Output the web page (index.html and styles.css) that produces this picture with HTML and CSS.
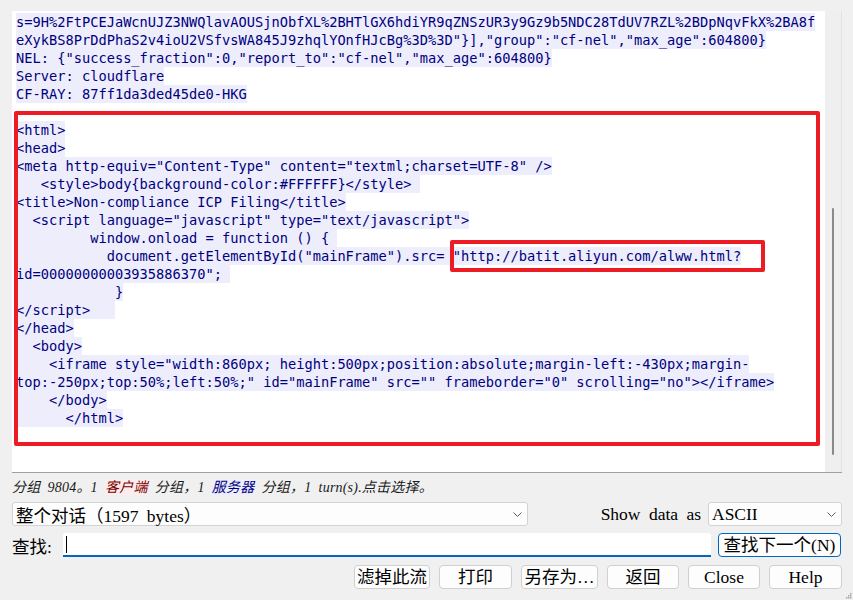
FILE: index.html
```html
<!DOCTYPE html>
<html lang="zh-CN">
<head>
<meta charset="utf-8">
<title>Follow TCP Stream</title>
<link rel="stylesheet" href="styles.css">
</head>
<body>
<div class="dialog">
  <div class="stream">
    <div class="text">
      <div class="ln"><span>s=9H%2FtPCEJaWcnUJZ3NWQlavAOUSjnObfXL%2BHTlGX6hdiYR9qZNSzUR3y9Gz9b5NDC28TdUV7RZL%2BDpNqvFkX%2BA8f</span></div>
      <div class="ln"><span>eXykBS8PrDdPhaS2v4ioU2VSfvsWA845J9zhqlYOnfHJcBg%3D%3D"}],"group":"cf-nel","max_age":604800}</span></div>
      <div class="ln"><span>NEL: {"success_fraction":0,"report_to":"cf-nel","max_age":604800}</span></div>
      <div class="ln"><span>Server: cloudflare</span></div>
      <div class="ln"><span>CF-RAY: 87ff1da3ded45de0-HKG</span></div>
      <div class="ln"><span></span></div>
      <div class="ln"><span>&lt;html&gt;</span></div>
      <div class="ln"><span>&lt;head&gt;</span></div>
      <div class="ln"><span>&lt;meta http-equiv="Content-Type" content="textml;charset=UTF-8" /&gt;</span></div>
      <div class="ln"><span>   &lt;style&gt;body{background-color:#FFFFFF}&lt;/style&gt; </span></div>
      <div class="ln"><span>&lt;title&gt;Non-compliance ICP Filing&lt;/title&gt;</span></div>
      <div class="ln"><span>  &lt;script language="javascript" type="text/javascript"&gt;</span></div>
      <div class="ln"><span>         window.onload = function () { </span></div>
      <div class="ln"><span>           document.getElementById("mainFrame").src= "http://batit.aliyun.com/alww.html?</span></div>
      <div class="ln"><span>id=00000000003935886370"; </span></div>
      <div class="ln"><span>            }</span></div>
      <div class="ln"><span>&lt;/script&gt;   </span></div>
      <div class="ln"><span>&lt;/head&gt;</span></div>
      <div class="ln"><span>  &lt;body&gt;</span></div>
      <div class="ln"><span>    &lt;iframe style="width:860px; height:500px;position:absolute;margin-left:-430px;margin-</span></div>
      <div class="ln"><span>top:-250px;top:50%;left:50%;" id="mainFrame" src="" frameborder="0" scrolling="no"&gt;&lt;/iframe&gt;</span></div>
      <div class="ln"><span>    &lt;/body&gt;</span></div>
      <div class="ln"><span>      &lt;/html&gt;</span></div>
    </div>
    <div class="vscroll"><div class="thumb"></div></div>
  </div>

  <div class="status">分组 9804。1 <span class="cli">客户端</span> 分组，1 <span class="srv">服务器</span> 分组，1 turn(s).点击选择。</div>

  <div class="row combos">
    <div class="combo combo-wide">
      <span>整个对话（1597 bytes）</span>
      <svg class="chev" width="9" height="5" viewBox="0 0 9 5"><polyline points="0.5,0.5 4.5,4.5 8.5,0.5" fill="none" stroke="#5a5a5a" stroke-width="1"/></svg>
    </div>
    <span class="lbl-show">Show data as</span>
    <div class="combo combo-small">
      <span>ASCII</span>
      <svg class="chev" width="9" height="5" viewBox="0 0 9 5"><polyline points="0.5,0.5 4.5,4.5 8.5,0.5" fill="none" stroke="#5a5a5a" stroke-width="1"/></svg>
    </div>
  </div>

  <div class="row find">
    <span class="lbl-find">查找:</span>
    <div class="input"><span class="caret"></span></div>
    <button class="btn btn-default">查找下一个(N)</button>
  </div>

  <div class="row buttons">
    <button class="btn w76">滤掉此流</button>
    <button class="btn w73">打印</button>
    <button class="btn w77">另存为…</button>
    <button class="btn w72">返回</button>
    <button class="btn w72">Close</button>
    <button class="btn w73">Help</button>
  </div>

  <div class="mark mark-body"></div>
  <div class="mark mark-url"></div>
  <svg class="grip" width="6" height="6" viewBox="0 0 6 6"><rect x="4" y="0" width="1.5" height="1.5" fill="#a8a8a8"/><rect x="2" y="2" width="1.5" height="1.5" fill="#a8a8a8"/><rect x="4" y="2" width="1.5" height="1.5" fill="#a8a8a8"/><rect x="0" y="4" width="1.5" height="1.5" fill="#a8a8a8"/><rect x="2" y="4" width="1.5" height="1.5" fill="#a8a8a8"/><rect x="4" y="4" width="1.5" height="1.5" fill="#a8a8a8"/></svg>
</div>
</body>
</html>
```

FILE: styles.css
```css
* { box-sizing: border-box; }

html, body {
  margin: 0;
  padding: 0;
  background: #f0f0f0;
}

body {
  width: 853px;
  height: 600px;
  overflow: hidden;
  font-family: "Liberation Serif", "Noto Sans CJK SC", serif;
  font-size: 17.5px;
  word-spacing: 4px;
  color: #000;
}

.dialog {
  position: relative;
  width: 853px;
  height: 600px;
  padding: 11px 11px 0 12px;
}

/* stream text area */
.stream {
  display: flex;
  width: 830px;
  height: 462px;
  border-bottom: 1px solid #a0a0a0;
}

.text {
  flex: 1;
  background: #ffffff;
  padding: 2px 0 0 4px;
  overflow: hidden;
  font-family: "DejaVu Sans Mono", monospace;
  font-size: 13.69px;
  line-height: 18px;
  word-spacing: 0;
  color: #00007f;
}

.ln {
  height: 18px;
  white-space: pre;
}

.ln span {
  display: inline-block;
  height: 18px;
  background: #ededfb;
  vertical-align: top;
}

.vscroll {
  position: relative;
  width: 17px;
  background: #efefef;
  border-right: 1px solid #e2e2e2;
}

.thumb {
  position: absolute;
  left: 7px;
  top: 197px;
  width: 2px;
  height: 247px;
  background: #8a8a8a;
  border-radius: 1px;
}

/* status line */
.status {
  margin-top: 7px;
  height: 16px;
  line-height: 16px;
  font-size: 14px;
  font-style: italic;
  word-spacing: 3.5px;
  letter-spacing: 0.2px;
  color: #1a1a1a;
  white-space: nowrap;
}

.cli {
  color: #7f0000;
  background: #fbeded;
}

.srv {
  color: #00007f;
  background: #ededfb;
}

.row {
  display: flex;
  align-items: center;
}

.combos {
  margin-top: 6px;
  height: 24px;
}

.combo {
  display: flex;
  align-items: center;
  justify-content: space-between;
  height: 24px;
  padding: 0 5px 0 3px;
  background: #fdfdfd;
  border: 1px solid #d3d3d3;
  border-radius: 3px;
  white-space: nowrap;
}

.combo-wide { width: 516px; }
.combo-small { width: 134px; margin-left: 7px; }

.lbl-show {
  margin-left: auto;
  white-space: nowrap;
}

.find {
  margin-top: 7px;
  height: 24px;
}

.lbl-find {
  width: 51px;
  white-space: nowrap;
}

.input {
  position: relative;
  width: 648px;
  height: 24px;
  background: #ffffff;
  border-bottom: 2px solid #0067c0;
  border-radius: 3px 3px 0 0;
}

.caret {
  position: absolute;
  left: 3px;
  top: 3px;
  width: 1px;
  height: 17px;
  background: #000;
}

.btn {
  height: 24px;
  padding: 0;
  font-family: "Liberation Serif", "Noto Sans CJK SC", serif;
  font-size: 17.5px;
  line-height: 20px;
  color: #000;
  background: #fdfdfd;
  border: 1px solid #d0d0d0;
  border-radius: 4px;
  white-space: nowrap;
}

.btn-default {
  width: 123px;
  margin-left: 7px;
  border-color: #0067c0;
}

.buttons {
  margin-top: 8px;
  justify-content: flex-end;
  gap: 9px;
  width: 830px;
}

.w76 { width: 76px; }
.w73 { width: 73px; }
.w77 { width: 77px; }
.w72 { width: 72px; }

/* red annotation boxes drawn over the screenshot */
.mark {
  position: absolute;
  border: 4px solid #ed1c24;
  border-radius: 2px;
}

.mark-body {
  left: 14px;
  top: 111px;
  width: 806px;
  height: 335px;
}

.mark-url {
  left: 450px;
  top: 240px;
  width: 315px;
  height: 32px;
}

.grip {
  position: absolute;
  right: 1px;
  bottom: 1px;
}
```
